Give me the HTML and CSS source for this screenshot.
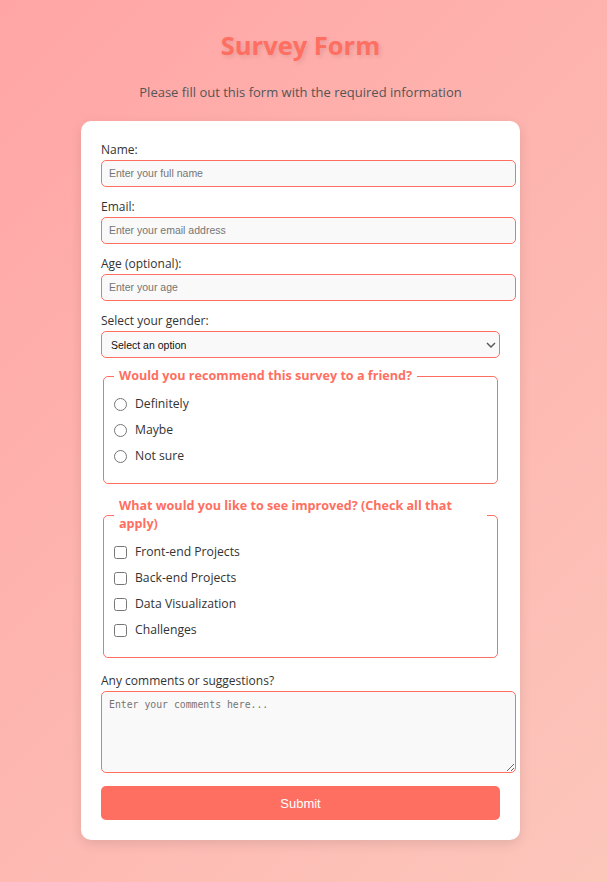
FILE: index.html
```html
<!DOCTYPE html>
<html lang="en">
<head>
<meta charset="utf-8">
<title>Survey Form</title>
<link rel="stylesheet" href="styles.css">
</head>
<body>
<header class="head">
  <h1 id="title" class="title">Survey Form</h1>
  <p id="description" class="desc">Please fill out this form with the required information</p>
</header>
<form id="survey-form" class="card">
  <label class="lbl" for="name">Name:</label>
  <input class="field" type="text" id="name" placeholder="Enter your full name">
  <label class="lbl" for="email">Email:</label>
  <input class="field" type="email" id="email" placeholder="Enter your email address">
  <label class="lbl" for="age">Age (optional):</label>
  <input class="field" type="number" id="age" placeholder="Enter your age">
  <label class="lbl" for="gender">Select your gender:</label>
  <select class="sel" id="gender">
    <option>Select an option</option>
    <option>Male</option>
    <option>Female</option>
    <option>Other</option>
  </select>
  <fieldset class="group">
    <legend class="legend">Would you recommend this survey to a friend?</legend>
    <label class="opt"><input type="radio" name="rec"> Definitely</label>
    <label class="opt"><input type="radio" name="rec"> Maybe</label>
    <label class="opt"><input type="radio" name="rec"> Not sure</label>
  </fieldset>
  <fieldset class="group">
    <legend class="legend">What would you like to see improved? (Check all that apply)</legend>
    <label class="opt"><input type="checkbox"> Front-end Projects</label>
    <label class="opt"><input type="checkbox"> Back-end Projects</label>
    <label class="opt"><input type="checkbox"> Data Visualization</label>
    <label class="opt"><input type="checkbox"> Challenges</label>
  </fieldset>
  <label class="lbl" for="comments">Any comments or suggestions?</label>
  <textarea class="area" id="comments" placeholder="Enter your comments here..."></textarea>
  <button class="submit" type="submit">Submit</button>
</form>
</body>
</html>
```
FILE: styles.css
```css
html { min-height: 100%; }
body {
  margin: 0;
  padding: 21px 26px 42px 20px;
  min-height: 100vh;
  box-sizing: border-box;
  font-family: "Comic Sans MS", "Open Sans", sans-serif;
  background: linear-gradient(135deg, #ffa5a5 0%, #fcc6bb 100%);
  color: #333;
}
.head { text-align: center; }
.title {
  margin: 8px 0 0;
  font-size: 25.5px;
  line-height: 32px;
  color: #ff6f61;
  text-shadow: 2px 2px 4px rgba(0,0,0,0.1);
}
.desc {
  margin: 22px 0 20px;
  font-size: 13px;
  color: #555;
}
.card {
  width: 399px;
  margin: 0 auto;
  padding: 20px;
  background: #fff;
  border-radius: 10px;
  box-shadow: 0 4px 12px rgba(0,0,0,0.1);
  display: flex;
  flex-direction: column;
  align-items: flex-start;
}
.lbl {
  display: block;
  font-size: 12px;
  line-height: 17px;
  margin-bottom: 2px;
  color: #333;
}
.field, .area {
  width: 100%;
  box-sizing: content-box;
  padding: 5px 7px;
  border: 1px solid #ff6f61;
  border-radius: 5px;
  background: #f9f9f9;
  font-family: Arial, "Liberation Sans", sans-serif;
  font-size: 10.5px;
  line-height: 15px;
  margin: 0 0 11px;
  color: #333;
}
.field::placeholder { color: #757575; }
.sel {
  -webkit-appearance: none;
  appearance: none;
  width: 100%;
  height: 27px;
  border: 1px solid #ff6f61;
  border-radius: 5px;
  background: #f9f9f9 url("data:image/svg+xml,%3Csvg xmlns='http://www.w3.org/2000/svg' width='10' height='6' viewBox='0 0 10 6'%3E%3Cpath d='M1 1l4 4 4-4' fill='none' stroke='%23555' stroke-width='1.4'/%3E%3C/svg%3E") no-repeat right 3px center;
  font-family: Arial, "Liberation Sans", sans-serif;
  font-size: 10.5px;
  color: #111;
  padding: 0 9px;
  margin: 0 0 9px;
}
.group {
  align-self: stretch;
  margin: 0 2px 13px 2px;
  padding: 9px 10px 17px;
  border: 1px solid #ff6f61;
  border-radius: 5px;
  display: flex;
  flex-direction: column;
  gap: 6px;
}
.legend {
  padding: 0 5px;
  font-weight: bold;
  font-size: 12.6px;
  line-height: 18px;
  color: #ff6f61;
}
.opt {
  display: flex;
  align-items: center;
  font-size: 12.2px;
  line-height: 20px;
  color: #333;
}
.opt input { margin: 0 8px 0 0; width: 13px; height: 13px; }
.group + .lbl { margin-top: 1px; }
.area {
  height: 70px;
  font-family: "DejaVu Sans Mono", "Liberation Mono", monospace;
  font-size: 9.8px;
  resize: vertical;
  margin-bottom: 13px;
}
.area::placeholder { color: #757575; }
.submit {
  width: 100%;
  height: 34px;
  border: 0;
  border-radius: 5px;
  background: #ff6f61;
  color: #fff;
  font-family: Arial, "Liberation Sans", sans-serif;
  font-size: 13px;
}
```
